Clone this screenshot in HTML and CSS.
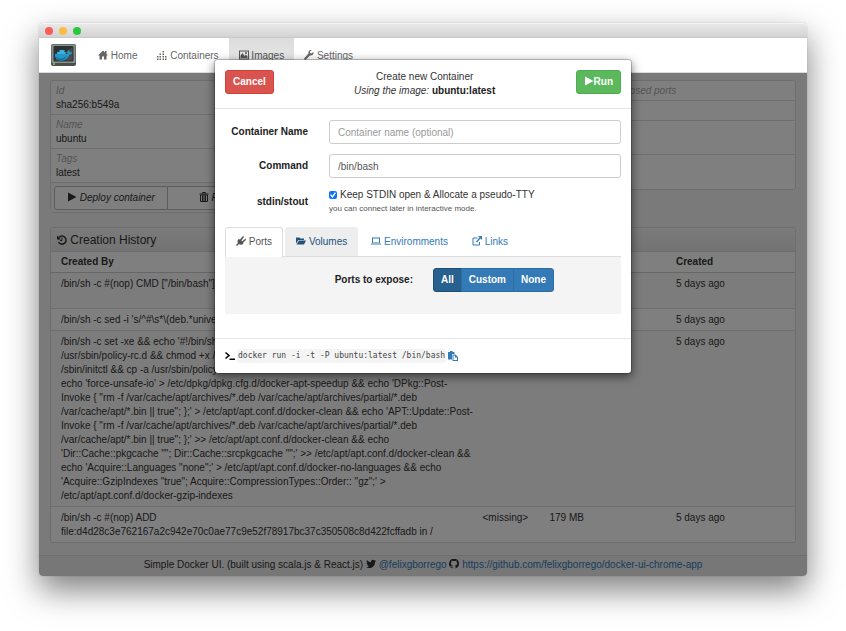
FILE: index.html
```
<!DOCTYPE html>
<html lang="en">
<head>
    <meta charset="utf-8">
    <title>Simple Docker UI</title>
    <link rel="stylesheet" href="styles.css">
</head>
<body>
    <!-- Icon set -->
    <svg class="sprite" aria-hidden="true">
        <symbol id="home" viewBox="0 0 20 20"><path d="M10 1 0 11h3v8h5v-6h4v6h5v-8h3l-3-3V2h-3v3z"/></symbol>
        <symbol id="containers" viewBox="0 0 20 20"><path d="M0 17h3v3H0zM5 17h3v3H5zM11 17h3v3h-3zM16 17h3v3h-3zM0 12h3v3H0zM5 12h3v3H5zM11 12h3v3h-3zM16 12h3v3h-3zM5 7h3v3H5zM11 7h3v3h-3zM11 2h3v3h-3z"/></symbol>
        <symbol id="picture" viewBox="0 0 20 20"><path fill-rule="evenodd" d="M0 1h20v18H0zM2 3v14h16V3z"/><path d="M3 16v-5l4-5 4 6 3-3 3 4v3z"/><circle cx="14" cy="6" r="2"/></symbol>
        <symbol id="wrench" viewBox="0 0 20 20"><path d="M19 4l-4 3-3-1 0-3 4-3c-4-1-8 2-7 7L1 16c-2 2 1 5 3 3l8-8c5 1 8-3 7-7z"/></symbol>
        <symbol id="play" viewBox="0 0 20 20"><path d="M2 1l17 9-17 9z"/></symbol>
        <symbol id="trash" viewBox="0 0 20 20"><path d="M7 1h6v2M1 4h18" fill="none" stroke="currentColor" stroke-width="2"/><path d="M7 0h1v4H7z"/><path d="M3 6h14v13H3zM7 7v11M10 7v11M13 7v11" fill="none" stroke="currentColor" stroke-width="2"/></symbol>
        <symbol id="history" viewBox="0 0 20 20"><path d="M4 5a8 8 0 1 1-1 9" fill="none" stroke="currentColor" stroke-width="3"/><path d="M0 1v8h8z"/><path d="M10 5v6H6" fill="none" stroke="currentColor" stroke-width="2"/></symbol>
        <symbol id="plug" viewBox="0 0 20 20"><path d="M5 6l10 9c-3 3-7 3-9 1l-4 4-2-2 4-4C2 12 3 9 5 6zM8 7l6-7 2 2-5 7zM12 11l7-6 1 3-6 5z"/><path d="M8 6l7 7-3 3-8-7z"/></symbol>
        <symbol id="folder" viewBox="0 0 20 20"><path d="M0 3h7l2 2h7v3H5l-5 7z"/><path d="M6 9h14l-4 8H1z"/></symbol>
        <symbol id="laptop" viewBox="0 0 20 20"><path fill-rule="evenodd" d="M2 3h16v11H2zM4 5v8h12V5zM0 15h20v2H0z"/></symbol>
        <symbol id="external" viewBox="0 0 20 20"><path d="M11 4H2v14h13v-6" fill="none" stroke="currentColor" stroke-width="2"/><path d="M12 0h8v8l-3-3-7 8-2-2 7-8z"/></symbol>
        <symbol id="terminal" viewBox="0 0 20 20"><path d="M1 3l7 6-7 6" fill="none" stroke="currentColor" stroke-width="3"/><path d="M9 15h11v3H9z"/></symbol>
        <symbol id="paste" viewBox="0 0 20 20"><path d="M0 2h4V0h5v2h4v4H8v11H0z"/><path fill-rule="evenodd" d="M9 7h6l5 5v8H9zM11 9v9h7v-5h-4V9z"/></symbol>
        <symbol id="twitter" viewBox="0 0 20 20"><path d="M20 4l-2 2c0 8-6 12-11 12-3 0-5-1-7-2 2 0 4 0 6-2-2 0-3-1-4-3h2c-2-1-3-2-3-4l2 1C1 6 1 4 2 2c2 3 5 4 8 4 0-5 5-6 7-3l3-1-2 2z"/></symbol>
        <symbol id="github" viewBox="0 0 20 20"><path d="M7 19v-3c-3 1-4-1-5-2 2-1 3 2 5 1l1-2c-5 0-5-6-3-7V3l3 1h4l3-1v3c2 2 2 7-3 7l1 2v4c4-1 7-5 7-9A10 10 0 1 0 7 19z"/></symbol>
    </svg>

    <div class="window">
        <div class="titlebar">
            <span class="dot dot-close"></span>
            <span class="dot dot-min"></span>
            <span class="dot dot-max"></span>
        </div>

        <!-- Top navigation -->
        <nav class="navbar">
            <svg class="logo" viewBox="0 0 50 44">
                <rect width="50" height="44" rx="4" fill="#4c504c"/>
                <rect x="1" y="1" width="48" height="37" rx="3" fill="#8b908c"/>
                <rect x="5" y="4" width="40" height="31" rx="2" fill="#2c3335"/>
                <path d="M7 33L43 6v27z" fill="#454d50"/>
                <path d="M8 20h25c-1-3 0-6 2-8 2 2 3 4 3 5l5-1c-1 4-3 5-6 5-3 8-9 12-16 12-8 0-14-4-13-13z" fill="#2496c8"/>
                <path d="M12 16h17v4H12zM17 12h10v4H17z" fill="#37b1df"/>
                <path d="M9 25c8 5 15 5 23-1-3 6-7 9-12 9s-9-3-11-8z" fill="#1778a5"/>
                <circle cx="6" cy="40" r="2" fill="#7bd34b"/>
            </svg>
            <a class="nav-item" href="#"><svg class="icon"><use href="#home"/></svg> Home</a>
            <a class="nav-item" href="#"><svg class="icon"><use href="#containers"/></svg> Containers</a>
            <a class="nav-item active" href="#"><svg class="icon"><use href="#picture"/></svg> Images</a>
            <a class="nav-item" href="#"><svg class="icon"><use href="#wrench"/></svg> Settings</a>
        </nav>

        <!-- Page behind the dialog -->
        <div class="page">
            <div class="content">
                <div class="details">
                    <div class="panel">
                        <div class="detail"><i>Id</i><span>sha256:b549a</span></div>
                        <div class="detail"><i>Name</i><span>ubuntu</span></div>
                        <div class="detail"><i>Tags</i><span>latest</span></div>
                        <div class="actions">
                            <button type="button"><svg class="icon"><use href="#play"/></svg> Deploy container</button>
                            <button type="button"><svg class="icon"><use href="#trash"/></svg> Remove</button>
                        </div>
                    </div>
                    <div class="panel third">
                        <div class="detail"><i>Container exposed ports</i></div>
                        <div class="detail short"></div>
                        <div class="detail tall"></div>
                        <div class="detail tall"></div>
                    </div>
                </div>

                <div class="panel history">
                    <h2><svg class="icon"><use href="#history"/></svg> Creation History</h2>
                    <table>
                        <thead>
                            <tr><th class="col-by">Created By</th><th class="col-id">Id</th><th class="col-size">Size</th><th class="col-tags">Tags</th><th>Created</th></tr>
                        </thead>
                        <tbody>
                            <tr><td>/bin/sh -c #(nop) CMD ["/bin/bash"]</td><td>b549a</td><td>0 B</td><td>ubuntu<br>latest</td><td>5 days ago</td></tr>
                            <tr><td>/bin/sh -c sed -i 's/^#\s*\(deb.*universe\)$/\1/g' /etc/apt/sources.list</td><td></td><td></td><td></td><td>5 days ago</td></tr>
                            <tr>
                                <td>
                                    /bin/sh -c set -xe &amp;&amp; echo '#!/bin/sh' &gt; /usr/sbin/policy-rc.d &amp;&amp; echo 'exit 101' &gt;&gt;<br>
                                    /usr/sbin/policy-rc.d &amp;&amp; chmod +x /usr/sbin/policy-rc.d &amp;&amp; dpkg-divert --local --rename --add<br>
                                    /sbin/initctl &amp;&amp; cp -a /usr/sbin/policy-rc.d /sbin/initctl &amp;&amp; sed -i 's/^exit.*/exit 0/' &amp;&amp;<br>
                                    echo 'force-unsafe-io' &gt; /etc/dpkg/dpkg.cfg.d/docker-apt-speedup &amp;&amp; echo 'DPkg::Post-<br>
                                    Invoke { "rm -f /var/cache/apt/archives/*.deb /var/cache/apt/archives/partial/*.deb<br>
                                    /var/cache/apt/*.bin || true"; };' &gt; /etc/apt/apt.conf.d/docker-clean &amp;&amp; echo 'APT::Update::Post-<br>
                                    Invoke { "rm -f /var/cache/apt/archives/*.deb /var/cache/apt/archives/partial/*.deb<br>
                                    /var/cache/apt/*.bin || true"; };' &gt;&gt; /etc/apt/apt.conf.d/docker-clean &amp;&amp; echo<br>
                                    'Dir::Cache::pkgcache ""; Dir::Cache::srcpkgcache "";' &gt;&gt; /etc/apt/apt.conf.d/docker-clean &amp;&amp;<br>
                                    echo 'Acquire::Languages "none";' &gt; /etc/apt/apt.conf.d/docker-no-languages &amp;&amp; echo<br>
                                    'Acquire::GzipIndexes "true"; Acquire::CompressionTypes::Order:: "gz";' &gt;<br>
                                    /etc/apt/apt.conf.d/docker-gzip-indexes
                                </td>
                                <td></td><td></td><td></td><td>5 days ago</td>
                            </tr>
                            <tr><td>/bin/sh -c #(nop) ADD file:d4d28c3e762167a2c942e70c0ae77c9e52f78917bc37c350508c8d422fcffadb in /</td><td>&lt;missing&gt;</td><td>179 MB</td><td></td><td>5 days ago</td></tr>
                        </tbody>
                    </table>
                </div>
            </div>

            <footer class="footer">
                Simple Docker UI. (built using scala.js &amp; React.js)
                <svg class="icon"><use href="#twitter"/></svg> <a href="#">@felixgborrego</a>
                <svg class="icon"><use href="#github"/></svg> <a href="#">https://github.com/felixgborrego/docker-ui-chrome-app</a>
            </footer>
            <div class="backdrop"></div>
        </div>

        <!-- Create container dialog -->
        <form class="modal" role="dialog" aria-label="Create new Container">
            <div class="modal-header">
                <button type="button" class="btn btn-danger">Cancel</button>
                <div class="modal-title">Create new Container<br><i>Using the image: </i><b>ubuntu:latest</b></div>
                <button type="button" class="btn btn-success"><svg class="icon"><use href="#play"/></svg>Run</button>
            </div>

            <div class="modal-body">
                <div class="field">
                    <label for="name">Container Name</label>
                    <input type="text" id="name" placeholder="Container name (optional)">
                </div>
                <div class="field">
                    <label for="command">Command</label>
                    <input type="text" id="command" value="/bin/bash">
                </div>
                <div class="field">
                    <span class="field-label">stdin/stout</span>
                    <div>
                        <label class="check" for="tty"><input type="checkbox" id="tty" checked> Keep STDIN open &amp; Allocate a pseudo-TTY</label>
                        <p class="help">you can connect later in interactive mode.</p>
                    </div>
                </div>

                <div class="tabs">
                    <a class="tab active" href="#"><svg class="icon"><use href="#plug"/></svg> Ports</a>
                    <a class="tab hover" href="#"><svg class="icon"><use href="#folder"/></svg> Volumes</a>
                    <a class="tab" href="#"><svg class="icon"><use href="#laptop"/></svg> Enviromments</a>
                    <a class="tab" href="#"><svg class="icon"><use href="#external"/></svg> Links</a>
                </div>
                <div class="tab-content">
                    <b id="expose">Ports to expose:</b>
                    <div class="btn-group" role="group" aria-labelledby="expose">
                        <button type="button" class="btn btn-primary active">All</button>
                        <button type="button" class="btn btn-primary">Custom</button>
                        <button type="button" class="btn btn-primary">None</button>
                    </div>
                </div>
            </div>

            <div class="modal-footer">
                <svg class="icon"><use href="#terminal"/></svg>
                <code>docker run -i -t -P ubuntu:latest /bin/bash</code>
                <a href="#" aria-label="Copy"><svg class="icon"><use href="#paste"/></svg></a>
            </div>
        </form>
    </div>
</body>
</html>
```
FILE: styles.css
```
* {
    box-sizing: border-box;
}

body {
    margin: 0;
    padding: 23px 39px 54px;
    background: #fff;
    color: #333;
    font-family: "Liberation Sans", Arial, sans-serif;
    font-size: 10px;
    line-height: 14px;
}

a {
    color: #337ab7;
    text-decoration: none;
}

button,
input {
    font: inherit;
    color: inherit;
}

.sprite {
    display: none;
}

.icon {
    width: 10px;
    height: 10px;
    fill: currentColor;
    vertical-align: -1px;
}

/* Window frame */
.window {
    position: relative;
    border-radius: 4px;
    box-shadow: 0 0 1px rgba(0, 0, 0, 0.4), 0 14px 32px rgba(0, 0, 0, 0.5);
}

.titlebar {
    display: flex;
    align-items: center;
    gap: 6px;
    height: 15px;
    padding-left: 6px;
    border-top: 1px solid #f4f4f4;
    border-bottom: 1px solid #c8c8c8;
    border-radius: 4px 4px 0 0;
    background: linear-gradient(#e8e8e8, #d3d3d3);
}

.dot {
    width: 8px;
    height: 8px;
    border-radius: 50%;
}

.dot-close {
    background: #fc5b57;
}

.dot-min {
    background: #fdbc40;
}

.dot-max {
    background: #28c840;
}

/* Navbar */
.navbar {
    display: flex;
    align-items: stretch;
    height: 35px;
    padding-left: 12px;
    border-bottom: 1px solid #ddd;
    background: #fff;
}

.logo {
    width: 25px;
    height: 22px;
    margin: 6px 12px 0 0;
}

.nav-item {
    padding: 11px 10px 0;
    color: #666;
}

.nav-item.active {
    background: linear-gradient(#dcdcdc, #ebebeb);
    color: #555;
}

/* Page */
.page {
    position: relative;
    overflow: hidden;
    border-radius: 0 0 4px 4px;
    background: #f4f4f4;
}

.backdrop {
    position: absolute;
    inset: 0;
    background: rgba(0, 0, 0, 0.5);
}

.content {
    padding: 7px 11px 12px;
}

.details {
    display: grid;
    grid-template-columns: repeat(3, 1fr);
    gap: 21px;
    align-items: start;
    margin-bottom: 14px;
}

.panel {
    border: 1px solid #ddd;
    border-radius: 3px;
    background: #fff;
}

.third {
    grid-column: 3;
}

.detail {
    padding: 3px 5px 2px;
    border-bottom: 1px solid #ddd;
}

.detail:last-child {
    border-bottom: 0;
}

.detail i,
.detail span {
    display: block;
}

.detail i {
    color: #aaa;
}

.short {
    height: 20px;
}

.tall {
    height: 34px;
}

.actions {
    display: flex;
    padding: 3px 3px 2px;
    background: #f8f8f8;
}

.actions button {
    flex: 1;
    height: 24px;
    padding: 0;
    border: 1px solid #bbb;
    border-radius: 3px 0 0 3px;
    background: #fff;
    font-style: italic;
}

.actions button + button {
    margin-left: -1px;
    border-radius: 0 3px 3px 0;
}

/* History table */
.history h2 {
    margin: 0;
    padding: 5px 6px 4px;
    background: linear-gradient(#f5f5f5, #e8e8e8);
    font-size: 12px;
    font-weight: normal;
    line-height: 14px;
}

.history table {
    width: 100%;
    border-collapse: collapse;
    table-layout: fixed;
}

.history th,
.history td {
    padding: 4px 0 3px;
    border-top: 1px solid #ddd;
    text-align: left;
    vertical-align: top;
}

.history th:first-child,
.history td:first-child {
    padding-left: 10px;
}

.history thead th {
    padding: 3px 0;
    border-bottom: 1px solid #ccc;
}

.history th.col-by {
    width: 58%;
}

.col-id {
    width: 9%;
}

.col-size {
    width: 6%;
}

.col-tags {
    width: 11%;
}

.history tbody tr:nth-child(odd) {
    background: #f9f9f9;
}

/* Footer */
.footer {
    padding: 2px 0 4px;
    border-top: 1px solid #ddd;
    background: #eee;
    text-align: center;
}

/* Dialog */
.modal {
    position: absolute;
    top: 36px;
    left: 0;
    right: 0;
    width: 418px;
    margin: 0 auto;
    border: 1px solid rgba(0, 0, 0, 0.2);
    border-radius: 4px;
    background: #fff;
    background-clip: padding-box;
    box-shadow: 0 3px 10px rgba(0, 0, 0, 0.5);
}

.modal-header {
    display: flex;
    justify-content: space-between;
    align-items: flex-start;
    padding: 10px;
    border-bottom: 1px solid #e5e5e5;
}

.modal-title {
    text-align: center;
}

.modal-title b {
    color: #222;
}

.btn {
    height: 24px;
    padding: 0 7px;
    border: 1px solid transparent;
    border-radius: 3px;
    color: #fff;
    font-weight: bold;
}

.btn-danger {
    border-color: #d43f3a;
    background: #d9534f;
}

.btn-success {
    border-color: #4cae4c;
    background: #5cb85c;
}

.btn-primary {
    border-color: #2e6da4;
    background: #337ab7;
}

.btn-primary.active {
    border-color: #204d74;
    background: #286090;
}

.modal-body {
    padding: 11px 10px;
}

.field {
    display: grid;
    grid-template-columns: 83px 1fr;
    gap: 21px;
    align-items: center;
    margin-bottom: 10px;
}

.field > label,
.field-label {
    font-weight: bold;
    text-align: right;
    color: #222;
}

.field input[type="text"] {
    width: 100%;
    height: 24px;
    padding: 0 8px;
    border: 1px solid #ccc;
    border-radius: 3px;
    background: #fff;
    color: #555;
}

.field input::placeholder {
    color: #999;
}

.check {
    display: flex;
    align-items: center;
    gap: 3px;
}

.check input {
    appearance: none;
    display: grid;
    place-items: center;
    width: 8px;
    height: 8px;
    margin: 0;
    border-radius: 2px;
    background: #0b75f5;
}

.check input:checked::before {
    content: "";
    width: 6px;
    height: 6px;
    background: #fff;
    clip-path: polygon(0 50%, 18% 38%, 40% 62%, 80% 5%, 100% 18%, 42% 100%);
}

.help {
    margin: 0;
    font-size: 8px;
    color: #555;
}

/* Tabs */
.tabs {
    display: flex;
    gap: 2px;
    margin-top: 11px;
    border-bottom: 1px solid #ddd;
}

.tab {
    padding: 7px 10px;
    border: 1px solid transparent;
    border-bottom: 0;
    border-radius: 3px 3px 0 0;
}

.tab.active {
    margin-bottom: -1px;
    border-color: #ddd;
    background: #fff;
    color: #555;
}

.tab.hover {
    background: #eee;
    color: #23527c;
}

.tab-content {
    display: grid;
    grid-template-columns: 188px 1fr;
    gap: 20px;
    align-items: center;
    padding: 11px 0 22px;
    background: #f4f4f4;
}

.tab-content b {
    color: #222;
    text-align: right;
}

.btn-group {
    display: flex;
}

.btn-group .btn {
    border-radius: 0;
}

.btn-group .btn + .btn {
    margin-left: -1px;
}

.btn-group .btn:first-child {
    border-radius: 3px 0 0 3px;
}

.btn-group .btn:last-child {
    border-radius: 0 3px 3px 0;
}

.modal-footer {
    display: flex;
    align-items: center;
    gap: 2px;
    margin-top: 13px;
    padding: 10px;
    border-top: 1px solid #e5e5e5;
    color: #000;
}

.modal-footer code {
    padding: 0 1px;
    border-radius: 3px;
    background: #f4f4f4;
    color: #444;
    font-family: "DejaVu Sans Mono", monospace;
    font-size: 8px;
}

.modal-footer a {
    display: flex;
}
```
